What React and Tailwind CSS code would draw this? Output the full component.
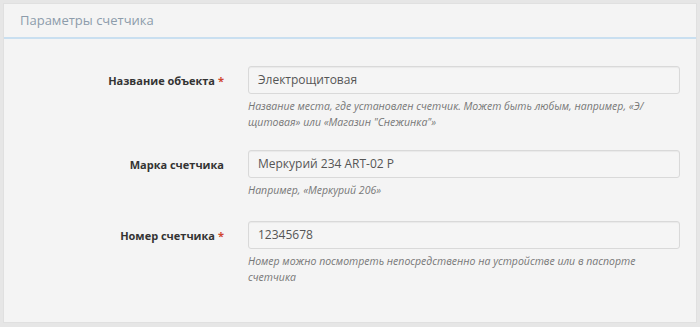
import React from "react";

const fields = [
  {
    label: "Название объекта",
    required: true,
    value: "Электрощитовая",
    help: (
      <>
        Название места, где установлен счетчик. Может быть любым, например, «Э/
        <wbr />
        щитовая» или «Магазин "Снежинка"»
      </>
    ),
    gap: "mb-[20px]",
  },
  {
    label: "Марка счетчика",
    required: false,
    value: "Меркурий 234 ART-02 P",
    help: "Например, «Меркурий 206»",
    gap: "mb-[23px]",
  },
  {
    label: "Номер счетчика",
    required: true,
    value: "12345678",
    help: "Номер можно посмотреть непосредственно на устройстве или в паспорте счетчика",
    gap: "",
  },
];

const FieldRow = ({ field }) => (
  <div className={`flex ${field.gap}`}>
    <label className="w-[220px] shrink-0 pt-[6px] text-right text-[11px] font-bold leading-[18px] text-[#333]">
      {field.label}
      {field.required && <span className="ml-[3px] text-[#d0452f]">*</span>}
    </label>
    <div className="ml-[24px] w-[432px]">
      <div className="flex h-[28px] items-center rounded-[3px] border border-[#d9d9d9] bg-[#f5f5f5] px-[9px] text-[12px] text-[#555] shadow-[inset_0_1px_1px_rgba(0,0,0,0.05)]">
        {field.value}
      </div>
      <p className="mt-[4px] pr-[30px] text-[10.5px] italic leading-[16px] text-[#777]">
        {field.help}
      </p>
    </div>
  </div>
);

export default function App() {
  return (
    <div
      className="h-[327px] w-[700px] bg-[#e6e6e6] p-[3px]"
      style={{ fontFamily: "'Open Sans', 'Noto Sans', sans-serif" }}
    >
      <div className="h-[320px] w-[694px] border border-[#e0e0e0] bg-[#f4f4f4]">
        <div className="flex h-[35px] items-center border-b-2 border-[#c9dff0] px-[16px] text-[13px] text-[#8d9cab]">
          Параметры счетчика
        </div>
        <div className="flex flex-col pt-[27px]">
          {fields.map((field) => (
            <FieldRow key={field.label} field={field} />
          ))}
        </div>
      </div>
    </div>
  );
}
